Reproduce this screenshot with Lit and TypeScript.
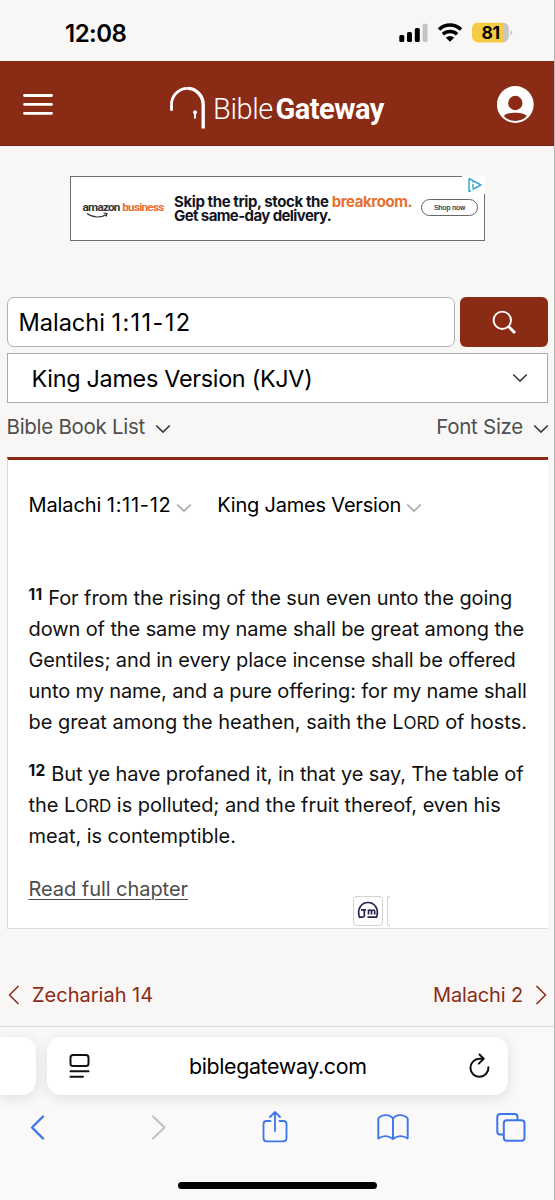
import { LitElement, html, css, svg } from "lit";
import { customElement } from "lit/decorators.js";

const chevronDown = svg`<path d="M1.2 1.5 L8 8 L14.8 1.5" />`;

@customElement("status-bar")
class StatusBar extends LitElement {
  static styles = css`
    :host { display: flex; height: 61px; align-items: flex-start; justify-content: space-between; box-sizing: border-box; padding: 20px 41px 0 65px; }
    .time { font-size: 24px; line-height: 28px; font-weight: 600; letter-spacing: -0.5px; }
    .icons { display: flex; padding-top: 2px; }
    svg { display: block; }
  `;
  render() {
    return html`
      <div class="time">12:08</div>
      <div class="icons">
        <svg width="114" height="22" viewBox="399 23.5 114 22">
          <rect x="399.3" y="36.5" width="5" height="7" rx="1.5" />
          <rect x="407" y="33.5" width="5" height="10" rx="1.5" />
          <rect x="414.8" y="29.5" width="5" height="14" rx="1.5" />
          <rect x="422.6" y="25.3" width="5" height="18.2" rx="1.5" fill="#c5c4c3" />
          <g fill="none" stroke="#000" stroke-width="3.5">
            <path d="M439 31 A16 16 0 0 1 461 31" />
            <path d="M442.9 35.7 A10.6 10.6 0 0 1 457.1 35.7" />
          </g>
          <path d="M450 43.300 L445.8 39.3 A6 6 0 0 1 454.2 39.3 Z" />
          <clipPath id="cell"><rect x="472" y="24" width="36.800" height="20" rx="6" /></clipPath>
          <g clip-path="url(#cell)">
            <rect x="472" y="24" width="31" height="21" fill="#f5cb45" />
            <rect x="503" y="24" width="7" height="21" fill="#c8c6c5" />
          </g>
          <path d="M510.3 31.500 a3 3 0 0 1 0 5.500 z" fill="#c8c6c5" />
          <text x="490.600" y="40.4" text-anchor="middle" font-family="Inter, sans-serif" font-size="17.500" font-weight="700" letter-spacing="-0.400">81</text>
        </svg>
      </div>`;
  }
}

@customElement("site-header")
class SiteHeader extends LitElement {
  static styles = css`
    :host { display: grid; grid-template-columns: 170px 1fr 57px; height: 85px; box-sizing: border-box; background: #8a2b16; color: #fff; border-bottom: 1px solid #74200f; }
    svg { display: block; }
    .menu { padding: 32px 0 0 22px; }
    .brand { display: flex; padding-top: 25px; }
    .name { display: flex; font-family: Roboto, "Open Sans", sans-serif; font-size: 29px; line-height: 40px; padding: 3px 0 0 7px; }
    .light { font-weight: 300; letter-spacing: -0.4px; }
    .bold { font-weight: 700; letter-spacing: -0.5px; padding-left: 2.500px; }
    .user { padding-top: 25px; }
  `;
  render() {
    return html`
      <div class="menu">
        <svg width="32" height="24" viewBox="0 0 32 24" stroke="#fff" stroke-width="2.8" stroke-linecap="round">
          <path d="M2.500 2.5H29.500M2.500 11.400H29.500M2.500 20.300H29.500" />
        </svg>
      </div>
      <div class="brand">
        <svg width="36" height="44" viewBox="170 86 36 44" fill="none" stroke="#fff">
          <path d="M171.5 110.700 V104.500 A16 16.400 0 0 1 187.500 88.300" stroke-width="2.800" />
          <path d="M187.500 88.400 A15.800 16.400 0 0 1 203.200 104.800 V128.500" stroke-width="3.400" />
          <circle cx="195" cy="112.300" r="2" fill="#fff" stroke="none" />
          <path d="M195 113 V118.500" stroke-width="2" />
        </svg>
        <div class="name"><span class="light">Bible</span><span class="bold">Gateway</span></div>
      </div>
      <div class="user">
        <svg width="38" height="40" viewBox="0 0 38 40">
          <ellipse cx="18.300" cy="18.500" rx="18.400" ry="18.500" fill="#fff" />
          <circle cx="18.300" cy="17" r="7.200" fill="#8a2b16" />
          <path d="M6.800 30 C10 25.500 26.600 25.500 29.800 30 C24 36.500 12.500 36.500 6.800 30Z" fill="#8a2b16" />
        </svg>
      </div>`;
  }
}

@customElement("ad-banner")
class AdBanner extends LitElement {
  static styles = css`
    :host { display: flex; justify-content: center; padding: 30px 0 56px; }
    .ad { display: flex; box-sizing: border-box; width: 415px; height: 65px; background: #fff; border: 1px solid #6d6f70; }
    svg { display: block; }
    .logo { width: 103.500px; padding: 22.500px 0 0 12px; box-sizing: border-box; font: 700 11.700px/14px Roboto, sans-serif; letter-spacing: -0.75px; white-space: nowrap; color: #333; }
    .orange { color: #e8702f; }
    .logo .orange { padding-left: 0.500px; }
    .logo svg { margin-top: -2px; }
    .copy { width: 246px; padding-top: 17.500px; font: 700 15px/14.5px Inter, sans-serif; letter-spacing: -0.4px; color: #14161f; white-space: nowrap; }
    .line { display: block; }
    .second { letter-spacing: -0.6px; }
    .side { display: flex; flex-direction: column; align-items: flex-end; flex: 1; }
    .choice { background: #fff; margin: -1px -1px 0 0; width: 23px; height: 18px; }
    .shop { box-sizing: border-box; width: 57px; height: 17px; margin: 4.500px 6px 0 0; border: 1px solid #666; border-radius: 9px; font: 7.200px/15px "Liberation Sans", sans-serif; text-align: center; padding-left: 1px; color: #333; -webkit-text-stroke: 0.2px #333; letter-spacing: -0.1px; }
  `;
  render() {
    return html`
      <div class="ad">
        <div class="logo">
          amazon <span class="orange">business</span>
          <svg width="28" height="8" viewBox="0 0 28 8" fill="none" stroke="#333" stroke-width="1.200">
            <path d="M4 1.500 C10 6 18 6 23.500 2.500 M20.500 1 L24 1.500 L23 4.500" />
          </svg>
        </div>
        <div class="copy">
          <span class="line">Skip the trip, stock the <span class="orange">breakroom.</span></span>
          <span class="line second">Get same-day delivery.</span>
        </div>
        <div class="side">
          <div class="choice">
            <svg width="23" height="18" viewBox="0 0 23 18" fill="none" stroke="#38a9cf" stroke-width="1.500">
              <path d="M7 2.500 L19 9 L10.500 13.500 M7 2.500 V15.500 L9 14.500" stroke-linejoin="round" />
              <path d="M11 8 V12 M11 5.500 V6.800" />
            </svg>
          </div>
          <div class="shop">Shop now</div>
        </div>
      </div>`;
  }
}

@customElement("passage-search")
class PassageSearch extends LitElement {
  static styles = css`
    :host { display: flex; flex-direction: column; gap: 5.500px; padding: 0 6px 0 6.500px; }
    .row { display: flex; gap: 5px; height: 50px; }
    .field { flex: 1; box-sizing: border-box; background: #fff; border: 1.500px solid #b4b2b1; border-radius: 7px; padding-left: 11px; font-size: 23.600px; line-height: 50px; letter-spacing: -0.05px; }
    .digits { letter-spacing: 1.400px; }
    .go { width: 88px; border-radius: 6px; background: #8a2b16; display: grid; place-items: center; }
    .select { display: flex; align-items: center; justify-content: space-between; box-sizing: border-box; height: 50.500px; background: #fff; border: 1px solid #acaaa9; padding: 1px 19px 0 24px; font-size: 23.400px; letter-spacing: -0.3px; }
    .tools { display: flex; justify-content: space-between; height: 36.500px; align-items: center; font-size: 20.500px; letter-spacing: -0.28px; color: #4f4f4f; }
    .tool { display: flex; align-items: center; gap: 10px; }
    .tool + .tool { gap: 9.500px; margin-right: -0.500px; }
    .tool svg { margin-top: 4px; }
    svg { display: block; fill: none; stroke: #3c3c3c; stroke-width: 1.700; }
    .go svg { stroke: #fff; stroke-width: 1.900; }
  `;
  render() {
    return html`
      <div class="row">
        <div class="field">Malachi <span class="digits">1:11-12</span></div>
        <div class="go">
          <svg width="25" height="25" viewBox="0 0 25 25">
            <circle cx="10.300" cy="10.300" r="8.700" />
            <path d="M16.500 16.500 L23 23" stroke-width="3" />
          </svg>
        </div>
      </div>
      <div class="select">
        <span class="version">King James Version (KJV)</span>
        <svg width="16" height="10" viewBox="0 0 16 10">${chevronDown}</svg>
      </div>
      <div class="tools">
        <div class="tool"><span class="book">Bible Book List</span><svg width="16" height="10" viewBox="0 0 16 10">${chevronDown}</svg></div>
        <div class="tool"><span class="size">Font Size</span><svg width="16" height="10" viewBox="0 0 16 10">${chevronDown}</svg></div>
      </div>`;
  }
}

@customElement("passage-card")
class PassageCard extends LitElement {
  static styles = css`
    :host { display: block; margin: 12px 6px 0 6.500px; box-sizing: border-box; height: 472px; background: #fff; border: solid #dcdada; border-width: 0 0 1.500px 1.500px; border-top: 3px solid #8a2b16; padding: 30px 0 0 21px; }
    .titles { display: flex; gap: 24.800px; height: 31px; font-size: 20px; line-height: 31px; }
    .title { display: flex; align-items: center; gap: 5px; }
    svg { display: block; fill: none; stroke: #aaa; stroke-width: 1.700; }
    .title svg { margin-top: 4px; }
    .ref { letter-spacing: -0.1px; }
    .ref .digits { letter-spacing: 0.700px; }
    .ver { letter-spacing: -0.2px; }
    .text { padding-top: 62px; font-size: 20px; line-height: 31px; color: #111; white-space: nowrap; }
    p { margin: 0 0 21px; }
    .line { display: block; height: 31px; }
    .num { font-size: 15.500px; font-weight: 700; line-height: 0; vertical-align: 5px; letter-spacing: 0.400px; }
    .lord { font-size: 17px; }
    .l1 { letter-spacing: -0.07px; }
    .l2 { letter-spacing: -0.1px; }
    .l3, .l4 { letter-spacing: -0.115px; }
    .l5 { letter-spacing: -0.03px; }
    .l6 { letter-spacing: -0.13px; }
    .l7, .l8 { letter-spacing: -0.05px; }
    .foot { display: flex; align-items: flex-start; justify-content: space-between; padding-right: 158.500px; }
    .full { font-size: 20px; line-height: 32px; letter-spacing: -0.05px; color: #4c4c4c; text-decoration: underline; text-decoration-thickness: 1.300px; text-underline-offset: 3px; }
    .chips { display: flex; gap: 4px; padding-top: 23px; }
    .chip { box-sizing: border-box; width: 30px; height: 30px; border: 1.500px solid #d3d1d1; border-radius: 4px; }
    .chip svg { stroke: #23234a; margin: 2px 0 0 3px; }
    .edge { width: 3px; border-right: 0; border-radius: 4px 0 0 4px; }
  `;
  render() {
    return html`
      <div class="titles">
        <div class="title"><span class="ref">Malachi <span class="digits">1:11-12</span></span><svg width="16" height="10" viewBox="0 0 16 10">${chevronDown}</svg></div>
        <div class="title"><span class="ver">King James Version</span><svg width="16" height="10" viewBox="0 0 16 10">${chevronDown}</svg></div>
      </div>
      <div class="text">
        <p>
          <span class="line l1"><span class="num">11</span> For from the rising of the sun even unto the going</span>
          <span class="line l2">down of the same my name shall be great among the</span>
          <span class="line l3">Gentiles; and in every place incense shall be offered</span>
          <span class="line l4">unto my name, and a pure offering: for my name shall</span>
          <span class="line l5">be great among the heathen, saith the L<span class="lord">ORD</span> of hosts.</span>
        </p>
        <p>
          <span class="line l6"><span class="num">12</span> But ye have profaned it, in that ye say, The table of</span>
          <span class="line l7">the L<span class="lord">ORD</span> is polluted; and the fruit thereof, even his</span>
          <span class="line l8">meat, is contemptible.</span>
        </p>
      </div>
      <div class="foot">
        <span class="full">Read full chapter</span>
        <div class="chips">
          <div class="chip">
            <svg width="22" height="22" viewBox="0 0 22 22" stroke-width="1.800">
              <path d="M6.500 18.200 H2.500 C-0.500 9.500 5 3.500 11 3.500 C17 3.500 22.500 9.500 19.500 18.200 H10.500" />
              <path d="M4 10.900 H9 M7.300 11 V18.200 M11.500 15.500 V10.500 M11.500 12.500 C12 10.500 14.500 10.500 14.500 12.500 V15.500 M14.500 12.500 C15 10.500 17.700 10.500 17.700 12.500 V15.500" />
            </svg>
          </div>
          <div class="chip edge"></div>
        </div>
      </div>`;
  }
}

@customElement("chapter-nav")
class ChapterNav extends LitElement {
  static styles = css`
    :host { display: flex; justify-content: space-between; height: 97px; padding: 50.500px 7px 0 8px; box-sizing: border-box; font-size: 20px; line-height: 30px; color: #8a2b16; }
    .link { display: flex; align-items: center; gap: 12px; height: 30px; }
    .next { letter-spacing: -0.15px; }
    svg { display: block; fill: none; stroke: #8a2b16; stroke-width: 1.500; }
  `;
  render() {
    return html`
      <div class="link"><svg width="12" height="20" viewBox="0 0 12 20"><path d="M10.500 1 L1.500 10 L10.500 19" /></svg><span class="prev">Zechariah 14</span></div>
      <div class="link"><span class="next">Malachi 2</span><svg width="12" height="20" viewBox="0 0 12 20"><path d="M1.500 1 L10.500 10 L1.500 19" /></svg></div>`;
  }
}

@customElement("browser-bar")
class BrowserBar extends LitElement {
  static styles = css`
    :host { display: block; height: 174px; box-sizing: border-box; background: #faf8f9; border-top: 1px solid #dddbdb; overflow: hidden; }
    .tabs { display: flex; gap: 11px; padding-top: 10px; }
    .peek, .address { height: 58px; background: #fff; box-shadow: 0 3px 14px rgba(60, 50, 60, 0.13); }
    .peek { width: 36px; border-radius: 0 14px 14px 0; }
    .address { box-sizing: border-box; width: 461px; border-radius: 14px; display: flex; align-items: center; justify-content: space-between; padding: 0 16px 0 21.500px; font-size: 21.400px; letter-spacing: -0.35px; }
    .host { padding-right: 3px; }
    svg { display: block; fill: none; stroke-linecap: round; stroke-linejoin: round; }
    .dark { stroke: #111; stroke-width: 2; }
    .actions { padding-top: 12.500px; }
    .blue { stroke: #3b76ea; stroke-width: 2; }
    .home { width: 199px; height: 7px; margin: 36.500px auto 0; border-radius: 4px; background: #000; }
  `;
  render() {
    return html`
      <div class="tabs">
        <div class="peek"></div>
        <div class="address">
          <svg class="dark" width="22" height="26" viewBox="0 0 22 26"><rect x="1.500" y="2" width="18" height="11" rx="2.500" /><path d="M1.500 18.300 H19.500 M1.500 23.700 H14" /></svg>
          <span class="host">biblegateway.com</span>
          <svg class="dark" width="24" height="26" viewBox="0 0 24 26"><path d="M15.500 5.800 H11.300 A9 9 0 1 0 20.400 14.200 M11.500 1.500 L15.700 5.800 L10.800 10.600" /></svg>
        </div>
      </div>
      <div class="actions">
        <svg class="blue" width="554" height="38" viewBox="0 1108 554 38">
          <path d="M43 1116.500 L32 1127.500 L43 1138.500" stroke-width="2.400" />
          <path d="M153 1116.500 L164.500 1127.500 L153 1138.500" stroke="#c2c0c2" />
          <path d="M270.500 1121 H266.500 Q263.500 1121 263.500 1124 V1138 Q263.500 1141.300 266.500 1141.300 H283.500 Q286.500 1141.300 286.500 1138 V1124 Q286.500 1121 283.500 1121 H279.500 M275 1131 V1112.500 M270 1117 L275 1112 L280 1117" stroke-width="1.800" />
          <path d="M393 1118.500 C390 1114 382 1114 378.300 1118.500 V1138.500 C383 1135 389 1135.500 393 1139 C397 1135.500 403 1135 407.700 1138.500 V1118.500 C404 1114 396 1114 393 1118.500 V1138.500" stroke-width="1.900" />
          <rect x="503.800" y="1120.300" width="20.700" height="20.500" rx="3" />
          <path d="M503.500 1134.500 H500 Q497.300 1134.500 497.300 1131.500 V1117 Q497.300 1114 500.300 1114 H514.500 Q517.500 1114 517.500 1117 V1120" />
        </svg>
      </div>
      <div class="home"></div>`;
  }
}

@customElement("app-root")
class AppRoot extends LitElement {
  static styles = css`
    :host { display: block; box-sizing: border-box; width: 555px; height: 1200px; overflow: hidden; background: #f9f7f6; border-right: 1px solid #b9b7b6; color: #000; font-family: Inter, "Noto Sans", sans-serif; }
  `;
  render() {
    return html`
      <status-bar></status-bar>
      <site-header></site-header>
      <ad-banner></ad-banner>
      <passage-search></passage-search>
      <passage-card></passage-card>
      <chapter-nav></chapter-nav>
      <browser-bar></browser-bar>`;
  }
}
